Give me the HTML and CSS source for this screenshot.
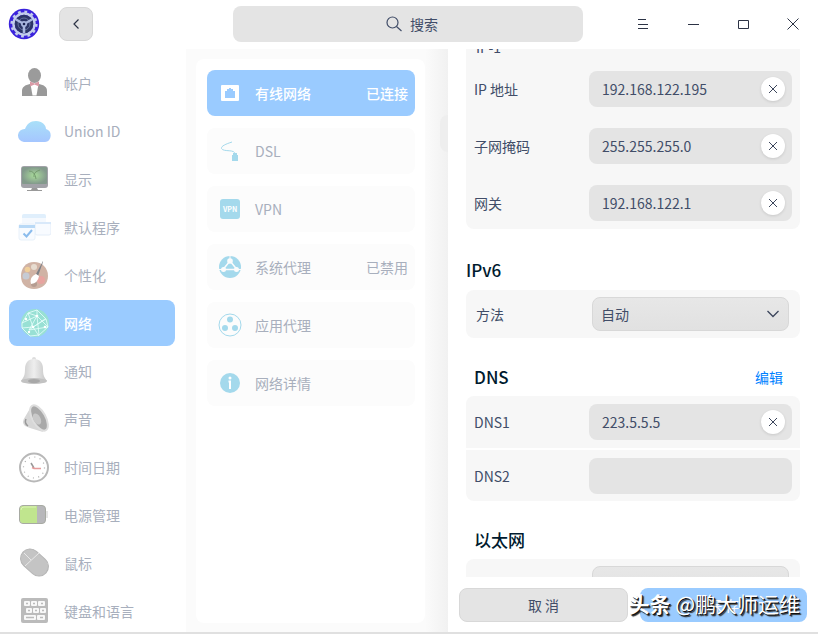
FILE: index.html
```
<!DOCTYPE html>
<html lang="zh-CN">
<head>
<meta charset="UTF-8">
<meta name="viewport" content="width=device-width, initial-scale=1.0">
<title>控制中心 - 网络</title>
<link rel="stylesheet" href="styles.css">
</head>
<body>
<div class="window">
    <header class="header">
        <svg class="logo" width="32" height="32" viewBox="0 0 32 32">
            <circle cx="16" cy="16" r="15.200" fill="#3a22dc"/>
            <circle cx="16" cy="16" r="10.500" fill="none" stroke="#c2cdeb" stroke-width="2.500"/>
            <circle cx="16" cy="16" r="12.300" fill="none" stroke="#c2cdeb" stroke-width="2.600" stroke-dasharray="2.800 3.640"/>
            <circle cx="16" cy="16" r="9.300" fill="#2b3566"/>
            <circle cx="16" cy="16" r="6" fill="none" stroke="#65739f" stroke-width="1"/>
            <path d="M16 16v9M16 16L8 11.500M16 16l8-4.500" stroke="#a9b7df" stroke-width="2.500"/>
            <circle cx="16" cy="16" r="3" fill="#a9b7df"/>
            <circle cx="16" cy="16" r="1.300" fill="#1c2452"/>
        </svg>
        <button class="back" aria-label="返回">
            <svg width="10" height="14" viewBox="0 0 10 14"><path d="M7.500 2.500L3 7l4.500 4.500" fill="none" stroke="#2c3345" stroke-width="1.200"/></svg>
        </button>
        <label class="search">
            <svg width="16" height="16" viewBox="0 0 16 16" fill="none" stroke="#414d68" stroke-width="1.200"><circle cx="6.500" cy="6.500" r="5.500"/><path d="M10.500 10.500l5 4.500"/></svg>
            <input type="text" placeholder="搜索" aria-label="搜索">
        </label>
        <div class="controls">
            <button aria-label="菜单"><svg width="12" height="12" viewBox="0 0 12 12"><path d="M1 1.500h8M1 6.500h10M1 10.500h10" stroke="#2c3345"/></svg></button>
            <button aria-label="最小化"><svg width="12" height="12" viewBox="0 0 12 12"><path d="M1 6.500h11" stroke="#2c3345"/></svg></button>
            <button aria-label="最大化"><svg width="12" height="12" viewBox="0 0 12 12"><path d="M1.500 2.500h10v8h-10z" fill="none" stroke="#2c3345"/></svg></button>
            <button aria-label="关闭"><svg width="12" height="12" viewBox="0 0 12 12"><path d="M.5.5l11 11M11.500.5l-11 11" stroke="#2c3345"/></svg></button>
        </div>
    </header>

    <div class="main">
        <nav class="sidebar">
            <a class="nav-item" href="#">
                <svg width="34" height="34" viewBox="0 0 34 34">
                    <path d="M5 30v-5c0-4 3-6 8-7h9c5 1 8 3 8 7v5z" fill="#999"/>
                    <path d="M13.500 18h8l-2 11.500h-4z" fill="#fff"/>
                    <ellipse cx="17.500" cy="9.500" rx="6.500" ry="7.500" fill="#9b9b9b"/>
                    <path d="M13 15.500l4.500 2 4.500-2v5l-4.500-2-4.500 2z" fill="#d99aa6"/>
                </svg>
                <span>帐户</span>
            </a>
            <a class="nav-item" href="#">
                <svg width="34" height="34" viewBox="0 0 34 34">
                    <defs><linearGradient id="cloud" x2="0" y2="1"><stop offset="0" stop-color="#a9e0f8"/><stop offset="1" stop-color="#a5c6ff"/></linearGradient></defs>
                    <path d="M7 28a6.500 6.500 0 0 1 1-13c2-5 5-8 11-8s10 4 10 8a6.700 6.700 0 0 1-1 13z" fill="url(#cloud)"/>
                </svg>
                <span>Union ID</span>
            </a>
            <a class="nav-item" href="#">
                <svg width="34" height="34" viewBox="0 0 34 34">
                    <defs><radialGradient id="screen"><stop offset="0" stop-color="#a9dc9b"/><stop offset="1" stop-color="#839a8c"/></radialGradient></defs>
                    <rect x="4" y="4" width="27" height="22" rx="3" fill="#a2a2a8"/>
                    <rect x="5" y="5" width="25" height="17" rx="1" fill="url(#screen)"/>
                    <path d="M12 9q6 0 7 8M23 8q-7 2-6 7" fill="none" stroke="#769b70"/>
                    <path d="M15 26h5l1 2h4v1H10v-1h4z" fill="#999"/>
                </svg>
                <span>显示</span>
            </a>
            <a class="nav-item" href="#">
                <svg width="34" height="34" viewBox="0 0 34 34">
                    <rect x="5" y="4" width="24" height="17" rx="2" fill="#f5f9fe"/><path d="M5 8V6q0-2 2-2h20q2 0 2 2v2z" fill="#e0effc"/>
                    <rect x="18" y="13" width="16" height="12" rx="2" fill="#f8fbff" stroke="#e4edf8"/><path d="M18 13h16" stroke="#d9e9fa" stroke-width="2"/>
                    <rect x="2" y="14" width="16" height="16" rx="2" fill="#f8fbff" stroke="#e8f1fa"/>
                    <path d="M2 18v-3h16v3z" fill="#b9d9f6"/><path d="M6.500 23.500l3 3L15 20" fill="none" stroke="#8bbced" stroke-width="2"/>
                </svg>
                <span>默认程序</span>
            </a>
            <a class="nav-item" href="#">
                <svg width="34" height="34" viewBox="0 0 34 34">
                    <path d="M17 4C9 4 4 10 4 18s5 13 13 13 14-5 14-13S25 4 17 4z" fill="#d0b3a5"/>
                    <circle cx="9" cy="18" r="3.500" fill="#c6cbd4"/><circle cx="10.500" cy="11.500" r="2.800" fill="#f0cf9b"/><circle cx="17" cy="9" r="3" fill="#e7dcd0"/>
                    <circle cx="24" cy="22" r="4" fill="#e7a4a0"/><circle cx="17" cy="26" r="3" fill="#b59c91"/>
                    <path d="M26 3l-7 13 2 2 5-14z" fill="#7f8288"/><path d="M19 16q-7 3-5 10 7-1 8-8z" fill="#fff"/>
                </svg>
                <span>个性化</span>
            </a>
            <a class="nav-item active" href="#">
                <svg width="34" height="34" viewBox="0 0 34 34">
                    <circle cx="18" cy="17" r="14" fill="#98e0d4"/>
                    <path d="M5 17l6-10 9-3 9 9 2 8-9 8-9 1-8-8zM5 17l15-7 11 11M11 7l9 3v-6M20 10l-8 14 16-11M12 24l19-3M11 7l5 14 6 9M5 22l11-1 13-8M20 10l2 19" fill="none" stroke="#e9fffc" stroke-width=".8"/>
                    <g fill="#fff"><circle cx="20" cy="10" r="1.300"/><circle cx="16" cy="21" r="1.300"/><circle cx="28" cy="21" r="1.300"/><circle cx="9" cy="13" r="1.200"/><circle cx="12" cy="26" r="1.200"/></g>
                </svg>
                <span>网络</span>
            </a>
            <a class="nav-item" href="#">
                <svg width="34" height="34" viewBox="0 0 34 34">
                    <defs><linearGradient id="bell"><stop offset="0" stop-color="#c8c8c8"/><stop offset=".5" stop-color="#eee"/><stop offset="1" stop-color="#c4c4c4"/></linearGradient></defs>
                    <circle cx="17" cy="5" r="2" fill="#ddd"/>
                    <path d="M17 5c-6 0-9 4-9 10 0 6-1 8-4 12h26c-3-4-4-6-4-12 0-6-3-10-9-10z" fill="url(#bell)"/>
                    <ellipse cx="17" cy="27" rx="13" ry="3" fill="#c2c2c2"/><ellipse cx="17" cy="27" rx="6" ry="2" fill="#a8a8a8"/>
                </svg>
                <span>通知</span>
            </a>
            <a class="nav-item" href="#">
                <svg width="34" height="34" viewBox="0 0 34 34">
                    <path d="M8 15q-4 5 0 9l5 2 13 4L15 3z" fill="#d7d7d7"/>
                    <path d="M9 17q-2 4 2 7" fill="none" stroke="#999" stroke-width="1.500"/>
                    <ellipse cx="22" cy="16" rx="6.500" ry="14" transform="rotate(-29 22 16)" fill="#a9a9a9" stroke="#dedede" stroke-width="2"/>
                    <ellipse cx="20" cy="17" rx="3.500" ry="6" transform="rotate(-29 20 17)" fill="#c9c9c9"/>
                </svg>
                <span>声音</span>
            </a>
            <a class="nav-item" href="#">
                <svg width="34" height="34" viewBox="0 0 34 34">
                    <circle cx="17" cy="17.500" r="14" fill="#fff" stroke="#b8b8b8" stroke-width="2"/>
                    <circle cx="17" cy="17.500" r="10.500" fill="none" stroke="#aaa" stroke-width="1.200" stroke-dasharray="1 4.500"/>
                    <path d="M17 18l-3-5" stroke="#999" stroke-width="1.500"/><path d="M15 17.500l2 1h7" fill="none" stroke="#e69c9c" stroke-width="1.500"/>
                </svg>
                <span>时间日期</span>
            </a>
            <a class="nav-item" href="#">
                <svg width="34" height="34" viewBox="0 0 34 34">
                    <rect x="2.500" y="7.500" width="26" height="18" rx="3.500" fill="#b7b7ba" stroke="#a7aaa2"/>
                    <path d="M20 8v17H6q-3 0-3-3V11q0-3 3-3z" fill="#c0e58e"/><path d="M4 12q0-3 3-3h12" fill="none" stroke="#dcf3b6"/>
                    <path d="M30 13v7" stroke="#ccc"/>
                </svg>
                <span>电源管理</span>
            </a>
            <a class="nav-item" href="#">
                <svg width="34" height="34" viewBox="0 0 34 34">
                    <rect x="8" y="1" width="19" height="31" rx="9.500" transform="rotate(-48 17.500 16.500)" fill="#c4c4c4" stroke="#b5b5b5"/>
                    <path d="M22 7L8 20M7 7l7 7" stroke="#e8e8e8"/>
                </svg>
                <span>鼠标</span>
            </a>
            <a class="nav-item" href="#">
                <svg width="34" height="34" viewBox="0 0 34 34">
                    <rect x="4" y="4" width="27" height="25" rx="2" fill="#bbb"/>
                    <g fill="#f8f8f8"><rect x="7" y="7" width="6" height="5" rx="1"/><rect x="14" y="7" width="6" height="5" rx="1"/><rect x="21" y="7" width="7" height="5" rx="1"/><rect x="9" y="14" width="6" height="5" rx="1"/><rect x="16" y="14" width="6" height="5" rx="1"/><rect x="23" y="14" width="6" height="5" rx="1"/><rect x="7" y="21" width="12" height="5" rx="1"/><rect x="20" y="21" width="8" height="5" rx="1"/></g>
                    <path d="M9 9.500h2M16 9.500h2M24 9.500h2M11 16.500h2M18 16.500h2M25 16.500h2M9 23.500h8M23 23.500h3" stroke="#bbb" stroke-width="1.500"/>
                </svg>
                <span>键盘和语言</span>
            </a>
        </nav>

        <div class="content">
            <div class="networks">
                <a class="net-item active" href="#">
                    <svg width="24" height="24" viewBox="0 0 24 24"><path fill-rule="evenodd" d="M4 4h16q1 0 1 1v14q0 1-1 1H4q-1 0-1-1V5q0-1 1-1zM7 17h10V10h-2V8h-2V7h-2v1H9v2H7z" fill="#fff"/></svg>
                    <span>有线网络</span>
                    <span class="state">已连接</span>
                </a>
                <a class="net-item" href="#">
                    <svg width="24" height="24" viewBox="0 0 24 24"><path d="M14 3C8 5 3 7 3.500 9.500c2 4 14 0 13.500 6" fill="none" stroke="#a4d9ec"/><path d="M15 14h4v2h1v6h-6v-6h1z" fill="#a4d9ec"/></svg>
                    <span>DSL</span>
                </a>
                <a class="net-item" href="#">
                    <svg width="24" height="24" viewBox="0 0 24 24"><rect x="2" y="2" width="20" height="20" rx="3" fill="#a4d9ec"/><text class="vpn" x="12" y="15" text-anchor="middle">VPN</text></svg>
                    <span>VPN</span>
                </a>
                <a class="net-item" href="#">
                    <svg width="24" height="24" viewBox="0 0 24 24"><circle cx="12" cy="12" r="11" fill="#a4d9ec"/><path d="M12 6L5 14.500h14z" fill="none" stroke="#fcfcfc" stroke-width="1.500"/><path d="M12 0v6M5 14.500H0M19 14.500h5" stroke="#fcfcfc"/><g fill="#fcfcfc"><circle cx="12" cy="6" r="2.800"/><circle cx="5.500" cy="14.500" r="2.500"/><circle cx="18.500" cy="14.500" r="2.500"/></g></svg>
                    <span>系统代理</span>
                    <span class="state">已禁用</span>
                </a>
                <a class="net-item" href="#">
                    <svg width="24" height="24" viewBox="0 0 24 24"><circle cx="12" cy="12" r="11" fill="none" stroke="#a4d9ec"/><g fill="#a4d9ec"><circle cx="12" cy="6.500" r="3"/><circle cx="7" cy="15" r="3"/><circle cx="17" cy="15" r="3"/></g></svg>
                    <span>应用代理</span>
                </a>
                <a class="net-item" href="#">
                    <svg width="24" height="24" viewBox="0 0 24 24"><circle cx="12" cy="12" r="10" fill="#a4d9ec"/><circle cx="12" cy="7" r="1.500" fill="#fff"/><path d="M10.500 10.500H12V18" fill="none" stroke="#fff" stroke-width="2"/></svg>
                    <span>网络详情</span>
                </a>
            </div>
            <div class="shade"><div class="shade-card"></div></div>
        </div>

        <form class="panel">
            <div class="scroll">
                <div class="card ipv4">
                    <p class="ip-name">IP-1</p>
                    <div class="row tall">
                        <label for="ip">IP 地址</label>
                        <div class="field"><input id="ip" type="text" value="192.168.122.195"><button type="button" class="clear" aria-label="清除"><svg width="10" height="10" viewBox="0 0 10 10"><path d="M1 1l8 8M9 1L1 9" stroke="#3c465c"/></svg></button></div>
                    </div>
                    <div class="row tall">
                        <label for="mask">子网掩码</label>
                        <div class="field"><input id="mask" type="text" value="255.255.255.0"><button type="button" class="clear" aria-label="清除"><svg width="10" height="10" viewBox="0 0 10 10"><path d="M1 1l8 8M9 1L1 9" stroke="#3c465c"/></svg></button></div>
                    </div>
                    <div class="row tall">
                        <label for="gateway">网关</label>
                        <div class="field"><input id="gateway" type="text" value="192.168.122.1"><button type="button" class="clear" aria-label="清除"><svg width="10" height="10" viewBox="0 0 10 10"><path d="M1 1l8 8M9 1L1 9" stroke="#3c465c"/></svg></button></div>
                    </div>
                </div>

                <div class="title"><h2>IPv6</h2></div>
                <div class="card">
                    <div class="row choice">
                        <label for="method">方法</label>
                        <div class="select">
                            <select id="method"><option>自动</option><option>手动</option></select>
                            <svg width="14" height="8" viewBox="0 0 14 8"><path d="M1.500 1L7 6.500 12.500 1" fill="none" stroke="#3c465c" stroke-width="1.300"/></svg>
                        </div>
                    </div>
                </div>

                <div class="title inset"><h2>DNS</h2><a href="#">编辑</a></div>
                <div class="card dns">
                    <div class="row">
                        <label for="dns1">DNS1</label>
                        <div class="field"><input id="dns1" type="text" value="223.5.5.5"><button type="button" class="clear" aria-label="清除"><svg width="10" height="10" viewBox="0 0 10 10"><path d="M1 1l8 8M9 1L1 9" stroke="#3c465c"/></svg></button></div>
                    </div>
                    <div class="row">
                        <label for="dns2">DNS2</label>
                        <div class="field"><input id="dns2" type="text"></div>
                    </div>
                </div>

                <div class="title inset"><h2>以太网</h2></div>
                <div class="card">
                    <div class="row choice">
                        <label for="mac">设备 MAC 地址</label>
                        <div class="select">
                            <select id="mac"><option>不绑定设备</option></select>
                            <svg width="14" height="8" viewBox="0 0 14 8"><path d="M1.500 1L7 6.500 12.500 1" fill="none" stroke="#3c465c" stroke-width="1.300"/></svg>
                        </div>
                    </div>
                </div>
            </div>
            <div class="actions">
                <button type="button" class="cancel">取 消</button>
                <button type="submit" class="save">保 存</button>
                <span class="watermark"><b>头条</b> @鹏大师运维</span>
            </div>
        </form>
    </div>
</div>
</body>
</html>
```
FILE: styles.css
```
* {
    box-sizing: border-box;
}

body {
    margin: 0;
    background: #fff;
    color: #414d68;
    font: 14px/20px "Noto Sans CJK SC", sans-serif;
}

button, input, select {
    margin: 0;
    padding: 0;
    border: none;
    background: none;
    color: inherit;
    font: inherit;
}

a {
    text-decoration: none;
}

svg {
    display: block;
    flex: none;
}

.window {
    display: flex;
    flex-direction: column;
    height: 100vh;
    overflow: hidden;
}

/* title bar */
.header {
    display: grid;
    grid-template-columns: 1fr 350px 1fr;
    grid-template-areas: "left search right";
    align-items: center;
    flex: none;
    height: 49px;
    padding: 0 10px 1px 8px;
}

.logo {
    grid-area: left;
}

.back {
    grid-area: left;
    display: flex;
    align-items: center;
    justify-content: center;
    width: 34px;
    height: 34px;
    margin-left: 51px;
    border: 1px solid #d8d8d8;
    border-radius: 8px;
    background: #e4e4e4;
}

.search {
    grid-area: search;
    display: flex;
    align-items: center;
    justify-content: center;
    gap: 8px;
    height: 36px;
    padding-left: 10px;
    border-radius: 8px;
    background: #e4e4e4;
}

.search input {
    width: 30px;
    outline: none;
}

.search input::placeholder {
    color: #414d68;
    opacity: 1;
}

.controls {
    grid-area: right;
    display: flex;
    justify-content: flex-end;
    gap: 20px;
}

.controls button {
    display: flex;
    align-items: center;
    justify-content: center;
    width: 30px;
    height: 30px;
}

.main {
    display: flex;
    flex: 1;
    min-height: 0;
    border-bottom: 2px solid #e0e0e0;
}

/* modules */
.sidebar {
    display: flex;
    flex-direction: column;
    gap: 2px;
    flex: 0 0 186px;
    padding: 11px 11px 0 9px;
    overflow: hidden;
}

.nav-item {
    display: flex;
    align-items: center;
    gap: 13px;
    flex: none;
    height: 46px;
    padding-left: 8px;
    border-radius: 8px;
    color: #a8afbd;
}

.nav-item.active,
.net-item.active {
    background: #9acbff;
    color: #fff;
    font-weight: 500;
}

/* network list */
.content {
    display: flex;
    flex: 1;
    min-width: 0;
    padding: 10px 0 9px 10px;
    background: #fbfbfb;
}

.networks {
    display: flex;
    flex-direction: column;
    gap: 12px;
    flex: 1;
    padding: 11px 10px 0 11px;
    border-radius: 8px;
    background: #fff;
}

.net-item {
    display: flex;
    align-items: center;
    gap: 13px;
    height: 46px;
    padding: 0 7px 0 11px;
    border-radius: 8px;
    background: #fcfcfc;
    color: #a8afbd;
}

.state {
    margin-left: auto;
}

.vpn {
    fill: #fff;
    font-size: 7px;
    font-weight: 700;
}

.shade {
    flex: 0 0 23px;
    margin: -10px 0 -9px;
    padding: 66px 0 0 15px;
    background: linear-gradient(to right, #fbfbfb, #f1f1f1);
}

.shade-card {
    height: 37px;
    border-radius: 8px 0 0 8px;
    background: #eee;
}

/* connection settings */
.panel {
    display: flex;
    flex-direction: column;
    flex: 0 0 370px;
    background: #fff;
}

.scroll {
    flex: 1;
    min-height: 0;
    padding: 0 18px;
    overflow: hidden;
}

.card {
    border-radius: 8px;
    background: #f7f7f7;
}

/* scrolled partly under the title bar */
.ipv4 {
    margin-top: -12px;
    padding-bottom: 8px;
}

.ip-name {
    margin: 0;
    padding: 0 10px 2px;
}

.row {
    display: flex;
    align-items: center;
    justify-content: space-between;
    height: 52px;
    padding: 0 8px;
}

.tall {
    height: 57px;
    padding-top: 21px;
}

.ip-name + .tall {
    height: 48px;
    padding-top: 12px;
}

.choice {
    height: 48px;
    padding: 0 11px 0 10px;
}

.dns .row + .row {
    height: 53px;
    border-top: 2px solid #fff;
}

.field {
    position: relative;
    width: 203px;
}

.field input {
    display: block;
    width: 100%;
    height: 36px;
    padding: 0 36px 0 13px;
    border-radius: 8px;
    background: #e4e4e4;
}

.clear {
    position: absolute;
    top: 6px;
    right: 7px;
    display: flex;
    align-items: center;
    justify-content: center;
    width: 24px;
    height: 24px;
    border-radius: 50%;
    background: #fff;
    box-shadow: 0 1px 3px rgba(0, 0, 0, 0.12);
}

.select {
    position: relative;
    width: 197px;
}

.select select {
    display: block;
    width: 100%;
    height: 34px;
    padding: 0 8px;
    border: 1px solid #d8d8d8;
    border-radius: 8px;
    background: linear-gradient(#e7e7e7, #e1e1e1);
    appearance: none;
}

.select svg {
    position: absolute;
    top: 13px;
    right: 9px;
    pointer-events: none;
}

.title {
    display: flex;
    align-items: center;
    justify-content: space-between;
    height: 40px;
    margin-top: 21px;
}

.title h2 {
    margin: 0;
    color: #001a2e;
    font-size: 17px;
    font-weight: 500;
}

.title a {
    color: #0081ff;
}

.inset {
    height: 38px;
    margin-top: 20px;
    padding: 0 17px 0 8px;
}

.actions {
    position: relative;
    display: flex;
    gap: 12px;
    flex: none;
    padding: 11px 11px 10px;
}

.actions button {
    flex: 1;
    height: 34px;
    border-radius: 8px;
}

.actions .cancel {
    border: 1px solid #d8d8d8;
    background: #e4e4e4;
}

.actions .save {
    background: #9acbff;
    color: #fff;
}

.watermark {
    position: absolute;
    right: 18px;
    bottom: 14px;
    color: #fff;
    font-size: 21px;
    line-height: 30px;
    text-shadow: 1px 1px 0 #111, 2px 2px 1px #333;
    white-space: nowrap;
}
```
